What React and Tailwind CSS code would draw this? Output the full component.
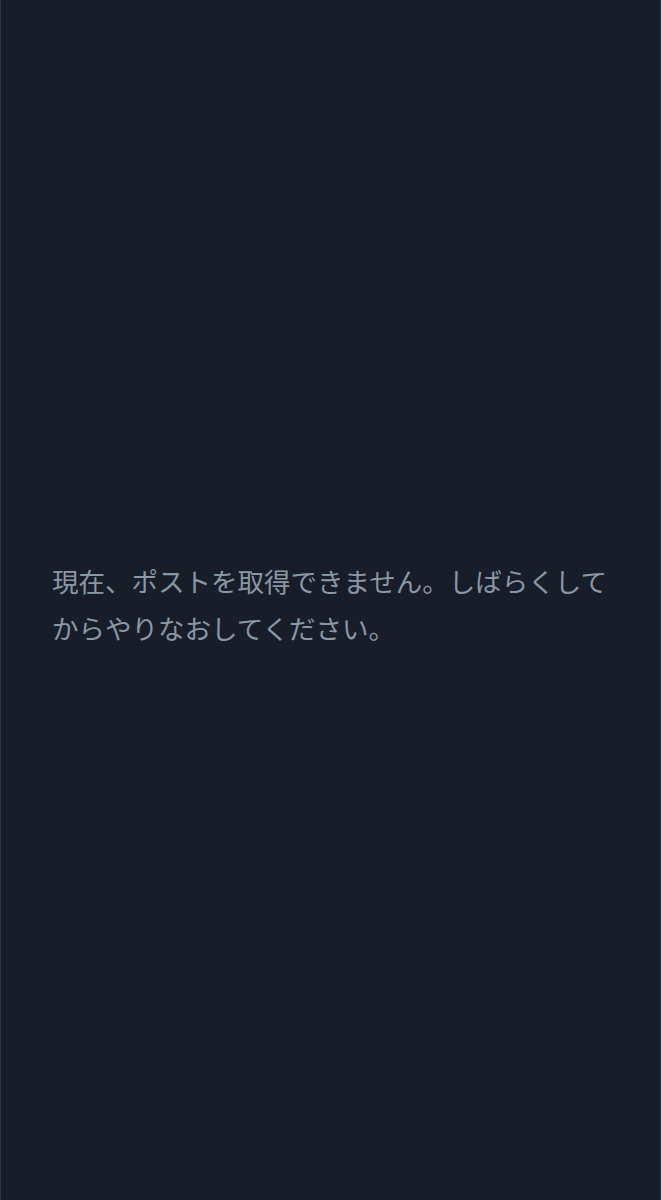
export default function App() {
  return (
    <div className="w-full h-screen bg-[#171e29] border-x border-[#2f3744] flex items-center pt-[7px]">
      <p
        className="pl-[51px] w-[630px] text-[26.5px] leading-[47px] text-[#8b97a4]"
        style={{ fontFamily: '"Noto Sans CJK JP", "Noto Sans", sans-serif' }}
      >
        現在、ポストを取得できません。しばらくしてからやりなおしてください。
      </p>
    </div>
  );
}
